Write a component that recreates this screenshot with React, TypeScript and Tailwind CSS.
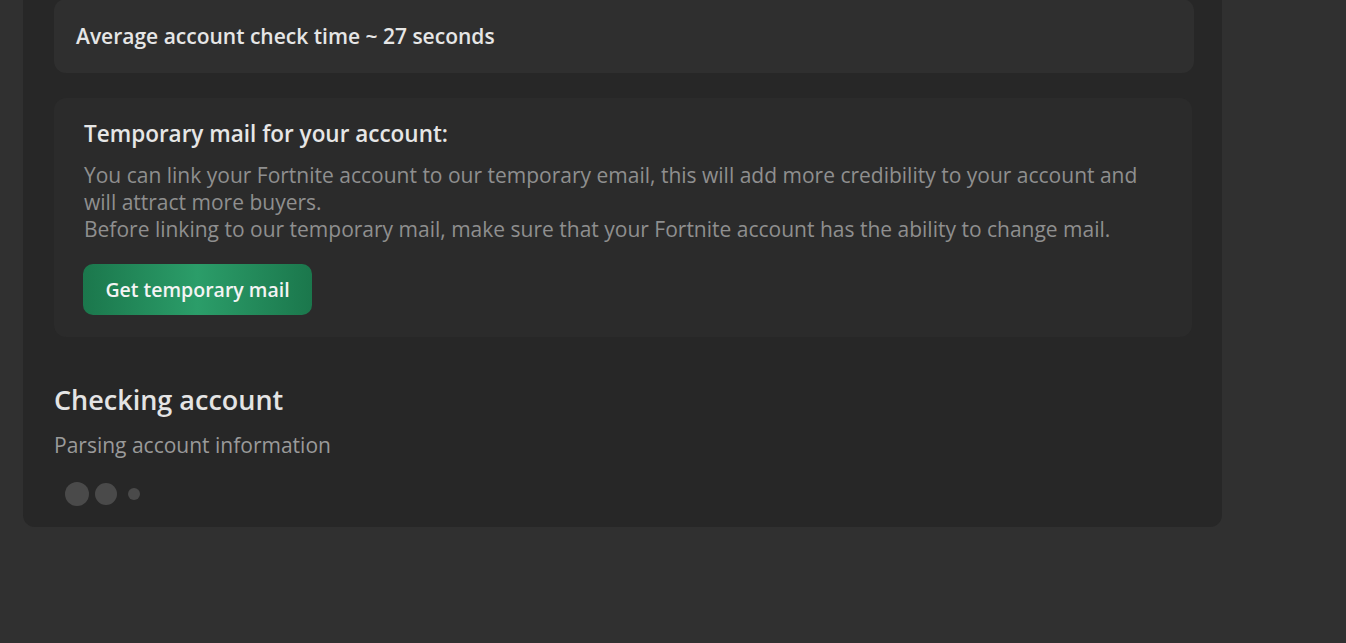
export default function App() {
  return (
    <div
      className="min-h-screen bg-[#303030] pl-[23px] pr-[124px] overflow-hidden"
      style={{ fontFamily: '"Open Sans", "Noto Sans", sans-serif' }}
    >
      <div className="mt-[-40px] rounded-b-[12px] bg-[#272727] pl-[31px] pr-[28px] pt-[39px] pb-[21px]">
        <div className="rounded-[12px] bg-[#2f2f2f] px-[22px] py-[23px]">
          <p className="text-[21px] leading-[28px] font-semibold text-[#e6e6e6]">
            Average account check time ~ 27 seconds
          </p>
        </div>

        <div className="mt-[25px] mr-[2px] rounded-[12px] bg-[#2b2b2b] pl-[30px] pr-[30px] pt-[22px] pb-[22px]">
          <h3 className="text-[22.5px] leading-[28px] font-semibold text-[#e6e6e6]">
            Temporary mail for your account:
          </h3>
          <p className="mt-[14px] text-[21px] leading-[27px] text-[#8f8f8f]">
            You can link your Fortnite account to our temporary email, this will add more credibility to your account and
            will attract more buyers.
            <br />
            Before linking to our temporary mail, make sure that your Fortnite account has the ability to change mail.
          </p>
          <button
            type="button"
            className="mt-[21px] -ml-[1px] h-[51px] w-[229px] rounded-[10px] text-[19.5px] font-semibold text-[#f4f4f4] bg-[linear-gradient(90deg,#1b774c_0%,#2b9d69_50%,#1b774c_100%)]"
          >
            Get temporary mail
          </button>
        </div>

        <h2 className="mt-[45px] text-[27px] leading-[36px] font-semibold text-[#e4e4e4]">Checking account</h2>
        <p className="mt-[14px] text-[21px] leading-[27px] text-[#9a9a9a]">Parsing account information</p>

        <div className="mt-[23px] flex items-center h-[24px] pl-[11px]">
          <span className="w-[24px] h-[24px] rounded-full bg-[#4a4a4a]" />
          <span className="ml-[6px] w-[22px] h-[22px] rounded-full bg-[#4a4a4a]" />
          <span className="ml-[11px] w-[12px] h-[12px] rounded-full bg-[#4a4a4a]" />
        </div>
      </div>
    </div>
  );
}
